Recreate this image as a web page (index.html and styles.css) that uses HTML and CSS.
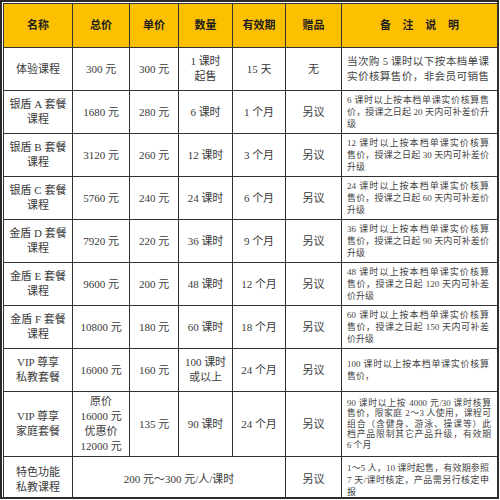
FILE: index.html
```html
<!DOCTYPE html>
<html lang="zh">
<head>
<meta charset="utf-8">
<link rel="stylesheet" href="styles.css">
</head>
<body>
<div class="frame">
<table class="price">
<colgroup>
<col class="c1"><col class="c2"><col class="c3"><col class="c4"><col class="c5"><col class="c6"><col class="c7">
</colgroup>
<thead>
<tr class="head">
<th>名称</th><th>总价</th><th>单价</th><th>数量</th><th>有效期</th><th>赠品</th><th class="wide">备 注 说 明</th>
</tr>
</thead>
<tbody>
<tr class="r">
<td>体验课程</td><td>300 元</td><td>300 元</td><td>1 课时<br>起售</td><td>15 天</td><td>无</td>
<td class="note big"><span class="ln">当次购 5 课时以下按本档单课</span><span class="ln">实价核算售价，非会员可销售</span></td>
</tr>
<tr class="r">
<td>银盾 A 套餐<br>课程</td><td>1680 元</td><td>280 元</td><td>6 课时</td><td>1 个月</td><td>另议</td>
<td class="note"><span class="ln">6 课时以上按本档单课实价核算售</span><span class="ln">价，授课之日起 20 天内可补差价升</span>级</td>
</tr>
<tr class="r">
<td>银盾 B 套餐<br>课程</td><td>3120 元</td><td>260 元</td><td>12 课时</td><td>3 个月</td><td>另议</td>
<td class="note"><span class="ln">12 课时以上按本档单课实价核算</span><span class="ln">售价，授课之日起 30 天内可补差价</span>升级</td>
</tr>
<tr class="r">
<td>银盾 C 套餐<br>课程</td><td>5760 元</td><td>240 元</td><td>24 课时</td><td>6 个月</td><td>另议</td>
<td class="note"><span class="ln">24 课时以上按本档单课实价核算</span><span class="ln">售价，授课之日起 60 天内可补差价</span>升级</td>
</tr>
<tr class="r">
<td>金盾 D 套餐<br>课程</td><td>7920 元</td><td>220 元</td><td>36 课时</td><td>9 个月</td><td>另议</td>
<td class="note"><span class="ln">36 课时以上按本档单课实价核算</span><span class="ln">售价，授课之日起 90 天内可补差价</span>升级</td>
</tr>
<tr class="r">
<td>金盾 E 套餐<br>课程</td><td>9600 元</td><td>200 元</td><td>48 课时</td><td>12 个月</td><td>另议</td>
<td class="note"><span class="ln">48 课时以上按本档单课实价核算</span><span class="ln">售价，授课之日起 120 天内可补差</span>价升级</td>
</tr>
<tr class="r">
<td>金盾 F 套餐<br>课程</td><td>10800 元</td><td>180 元</td><td>60 课时</td><td>18 个月</td><td>另议</td>
<td class="note"><span class="ln">60 课时以上按本档单课实价核算</span><span class="ln">售价，授课之日起 150 天内可补差</span>价升级</td>
</tr>
<tr class="r">
<td>VIP 尊享<br>私教套餐</td><td>16000 元</td><td>160 元</td><td>100 课时<br>或以上</td><td>24 个月</td><td>另议</td>
<td class="note"><span class="ln">100 课时以上按本档单课实价核算</span>售价，</td>
</tr>
<tr class="tall">
<td>VIP 尊享<br>家庭套餐</td><td>原价<br>16000 元<br>优惠价<br>12000 元</td><td>135 元</td><td>90 课时</td><td>24 个月</td><td>另议</td>
<td class="note dense"><span class="ln">90 课时以上按 4000 元/30 课时核算</span><span class="ln">售价，限家庭 2～3 人使用，课程可</span><span class="ln">组合（含健身、游泳、操课等）此</span><span class="ln">档产品限制其它产品升级，有效期</span>6 个月</td>
</tr>
<tr class="last">
<td>特色功能<br>私教课程</td><td colspan="4">200 元～300 元/人/课时</td><td>另议</td>
<td class="note"><span class="ln">1～5 人，10 课时起售，有效期参照</span><span class="ln">7 天/课时核定，产品需另行核定申</span>报</td>
</tr>
</tbody>
</table>
</div>
</body>
</html>
```
FILE: styles.css
```css
html, body {
  margin: 0;
  padding: 0;
  background: #ffffff;
}
.frame {
  width: 499px;
  height: 499px;
  box-sizing: border-box;
  border: 2px solid #2a2a2a;
  padding: 1px 0 0 1px;
  background: #fff;
}
.price {
  border-collapse: collapse;
  table-layout: fixed;
  width: 495px;
  font-family: "Liberation Serif", "Noto Sans CJK SC", serif;
  color: #3a3a3a;
  font-size: 11px;
}
.c1 { width: 69px; }
.c2 { width: 57px; }
.c3 { width: 49px; }
.c4 { width: 54px; }
.c5 { width: 53px; }
.c6 { width: 56px; }
.c7 { width: auto; }
.price th, .price td {
  border: 1px solid #333;
  text-align: center;
  vertical-align: middle;
  padding: 0 2px;
  line-height: 15px;
}
.head th {
  background: #fdc000;
  color: #1e1e1e;
  font-weight: bold;
  height: 43px;
  font-size: 11px;
}
.head .wide {
  word-spacing: 9px;
}
.r td { height: 42px; }
.tall td { height: 64px; }
.last td { height: 45px; }
.price .note {
  text-align: left;
  font-size: 9px;
  line-height: 12px;
  padding: 0 8px 0 5px;
  color: #444;
  white-space: nowrap;
}
.price .note.big {
  font-size: 10.6px;
  line-height: 15px;
}
.price .note.dense {
  font-size: 8.8px;
  line-height: 10.6px;
  padding-right: 6px;
}
.ln {
  display: block;
  text-align: justify;
  text-align-last: justify;
}
```
